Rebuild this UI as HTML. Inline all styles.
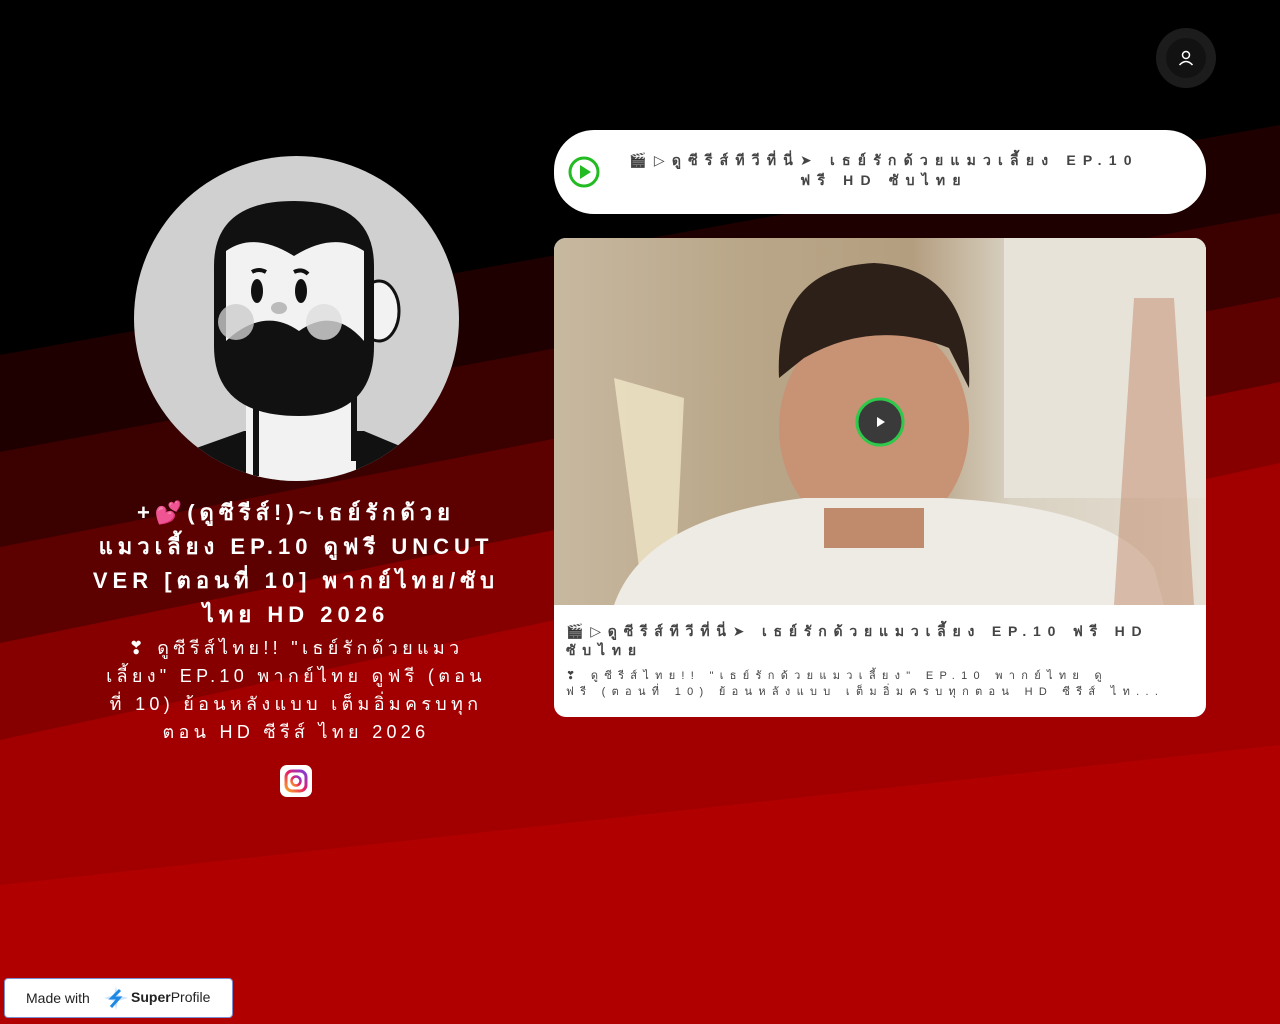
<!DOCTYPE html>
<html><head><meta charset="utf-8"><style>
*{margin:0;padding:0;box-sizing:border-box}
body{width:1280px;height:1024px;overflow:hidden;position:relative;font-family:"Liberation Sans","DejaVu Sans",sans-serif;background:#000}
.bg{position:absolute;left:0;top:0}
.avatar{position:absolute;left:134px;top:156px;width:325px;height:325px;border-radius:50%;overflow:hidden;background:#d0d0d0}
.title{position:absolute;left:46px;top:496px;width:500px;text-align:center;color:#fff;font-weight:bold;font-size:22px;line-height:34px;white-space:nowrap;letter-spacing:5px}
.desc{position:absolute;left:46px;top:634px;width:500px;text-align:center;color:#fff;font-size:18px;line-height:28px;white-space:nowrap;letter-spacing:4.3px}
.ig{position:absolute;left:280px;top:765px;width:32px;height:32px;background:#fff;border-radius:7px}
.btn{position:absolute;left:554px;top:130px;width:652px;height:84px;background:#fff;border-radius:40px}
.btn .t{position:absolute;left:30px;top:20px;width:600px;text-align:center;font-weight:bold;font-size:14px;line-height:20px;color:#444;white-space:nowrap;letter-spacing:7.2px}
.card{position:absolute;left:554px;top:238px;width:652px;height:479px;background:#fff;border-radius:12px;overflow:hidden}
.photo{position:absolute;left:0;top:0;width:652px;height:367px;background:linear-gradient(90deg,#c7b8a0 0%,#b9a688 30%,#b49e80 55%,#d8d0c0 70%,#e6e0d4 100%)}
.ct{position:absolute;left:12px;top:384px;width:640px;font-weight:bold;font-size:14px;line-height:19px;color:#444;white-space:nowrap;letter-spacing:6.8px}
.cd{position:absolute;left:12px;top:430px;width:640px;font-size:11px;line-height:16px;color:#444;white-space:nowrap;letter-spacing:6.3px}
.user{position:absolute;left:1156px;top:28px;width:60px;height:60px;border-radius:50%;background:#1c1c1c}
.user i{position:absolute;left:10px;top:10px;width:40px;height:40px;border-radius:50%;background:#121212}
.badge{position:absolute;left:4px;top:978px;width:229px;height:40px;background:#fff;border:1px solid #7a8fd0;border-radius:4px;font-size:14px;color:#222}
</style></head><body>
<svg class="bg" width="1280" height="1024">
<rect width="1280" height="1024" fill="#000"/>
<polygon points="0,355 1280,125 1280,1024 0,1024" fill="#1f0000"/>
<polygon points="0,452 1280,213 1280,1024 0,1024" fill="#3b0000"/>
<polygon points="0,547 1280,297 1280,1024 0,1024" fill="#5c0000"/>
<polygon points="0,643 1280,382 1280,1024 0,1024" fill="#860000"/>
<polygon points="0,740 1280,463 1280,1024 0,1024" fill="#a20000"/>
<polygon points="0,885 1280,745 1280,1024 0,1024" fill="#b00000"/>
</svg>
<div class="avatar"><svg width="325" height="325" viewBox="0 0 325 325">
<path d="M40 300 L110 275 L230 275 L290 300 L290 325 L40 325Z" fill="#111"/>
<rect x="112" y="240" width="110" height="90" fill="#f2f2f2"/>
<line x1="122" y1="240" x2="122" y2="320" stroke="#111" stroke-width="6"/>
<line x1="220" y1="240" x2="220" y2="305" stroke="#111" stroke-width="6"/>
<ellipse cx="245" cy="155" rx="20" ry="30" fill="#f2f2f2" stroke="#111" stroke-width="3"/>
<path d="M80 110 Q80 45 160 45 Q240 45 240 110 L240 190 Q240 260 165 260 Q80 260 80 190Z" fill="#111"/>
<path d="M92 95 Q120 75 160 100 Q200 75 230 95 L230 185 Q200 150 165 175 Q130 150 92 185Z" fill="#f2f2f2"/>
<ellipse cx="123" cy="135" rx="6" ry="12" fill="#111"/><ellipse cx="167" cy="135" rx="6" ry="12" fill="#111"/>
<path d="M118 116 Q125 112 132 116 M160 116 Q168 112 174 118" stroke="#111" stroke-width="4" fill="none"/>
<ellipse cx="145" cy="152" rx="8" ry="6" fill="#bbb"/>
<circle cx="102" cy="166" r="18" fill="#ccc" opacity=".8"/><circle cx="190" cy="166" r="18" fill="#ddd" opacity=".8"/>
</svg></div>
<div class="title">+💕(ดูซีรีส์!)~เธย์รักด้วย<br>แมวเลี้ยง EP.10 ดูฟรี UNCUT<br>VER [ตอนที่ 10] พากย์ไทย/ซับ<br>ไทย HD 2026</div>
<div class="desc">❣ ดูซีรีส์ไทย!! "เธย์รักด้วยแมว<br>เลี้ยง" EP.10 พากย์ไทย ดูฟรี (ตอน<br>ที่ 10) ย้อนหลังแบบ เต็มอิ่มครบทุก<br>ตอน HD ซีรีส์ ไทย 2026</div>
<div class="ig"><svg width="32" height="32"><defs><linearGradient id="g" x1="0" y1="1" x2="1" y2="0"><stop offset="0" stop-color="#f9a825"/><stop offset=".5" stop-color="#e91e63"/><stop offset="1" stop-color="#7b3fe4"/></linearGradient></defs><rect x="6" y="6" width="20" height="20" rx="6" fill="none" stroke="url(#g)" stroke-width="3"/><circle cx="16" cy="16" r="4.5" fill="none" stroke="url(#g)" stroke-width="2.5"/></svg></div>
<div class="user"><i></i><svg style="position:absolute;left:20px;top:20px" width="20" height="20" viewBox="0 0 20 20" fill="none" stroke="#fff" stroke-width="1.5"><circle cx="10" cy="7" r="3.5"/><path d="M3.5 17 Q10 10 16.5 17"/></svg></div>
<div class="btn"><svg style="position:absolute;left:14px;top:26px" width="32" height="32"><circle cx="16" cy="16" r="14" fill="none" stroke="#22bb22" stroke-width="3"/><path d="M12 9 L23 16 L12 23Z" fill="#22bb22"/></svg>
<div class="t">🎬▷ดูซีรีส์ทีวีที่นี่➤ เธย์รักด้วยแมวเลี้ยง EP.10<br>ฟรี HD ซับไทย</div></div>
<div class="card"><div class="photo"><svg width="652" height="367">
<rect x="450" y="0" width="202" height="260" fill="#e8e3d8"/>
<path d="M60 140 L130 160 L120 367 L90 367Z" fill="#f0e6c8" opacity=".8"/>
<ellipse cx="320" cy="190" rx="95" ry="110" fill="#c89274"/>
<path d="M225 140 Q220 30 320 25 Q420 30 415 150 L395 110 Q320 80 250 120Z" fill="#2c2018"/>
<path d="M60 367 Q90 280 250 260 L390 260 Q560 270 600 330 L610 367Z" fill="#eeeae4"/>
<rect x="270" y="270" width="100" height="40" fill="#c08a6c"/>
<path d="M580 60 L620 60 L640 367 L560 367Z" fill="#c08a6c" opacity=".5"/>
</svg>
<svg style="position:absolute;left:301px;top:159px" width="50" height="50"><circle cx="25" cy="25" r="23" fill="#3a3a3a" stroke="#2ec84a" stroke-width="3"/><path d="M22 20 L30 25 L22 30Z" fill="#fff"/></svg></div>
<div class="ct">🎬▷ดูซีรีส์ทีวีที่นี่➤ เธย์รักด้วยแมวเลี้ยง EP.10 ฟรี HD<br>ซับไทย</div>
<div class="cd">❣ ดูซีรีส์ไทย!! "เธย์รักด้วยแมวเลี้ยง" EP.10 พากย์ไทย ดู<br>ฟรี (ตอนที่ 10) ย้อนหลังแบบ เต็มอิ่มครบทุกตอน HD ซีรีส์ ไท...</div></div>
<div class="badge"><span style="position:absolute;left:21px;top:11px">Made with</span>
<svg style="position:absolute;left:98px;top:6px" width="26" height="26" viewBox="0 0 26 26"><path d="M13 1 L15 10 L25 13 L15 16 L13 25 L11 16 L1 13 L11 10Z" fill="#cfe4ff"/><path d="M17 5 L9 13 L16 13 L8 22" fill="none" stroke="#1e88e5" stroke-width="3"/></svg>
<span style="position:absolute;left:126px;top:10px"><b>Super</b>Profile</span></div>
</body></html>
